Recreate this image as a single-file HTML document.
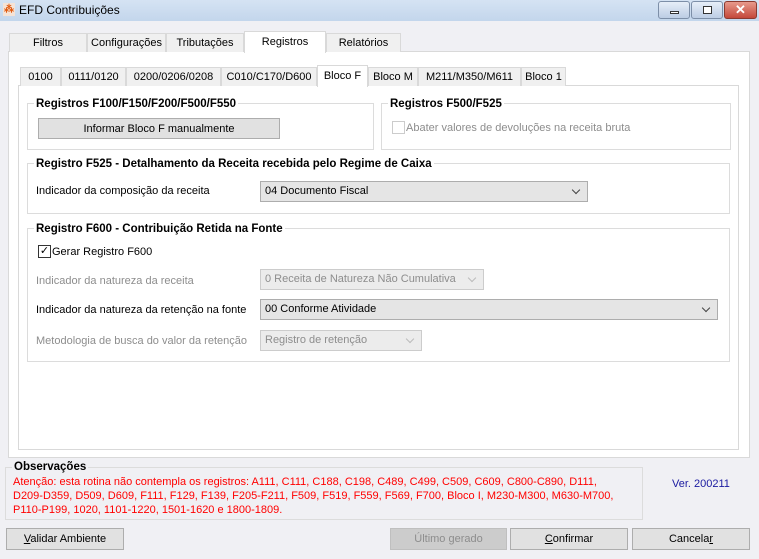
<!DOCTYPE html>
<html><head><meta charset="utf-8"><style>
*{box-sizing:border-box;margin:0;padding:0}
body{width:759px;height:559px;overflow:hidden;background:#f0f0f4;font-family:"Liberation Sans",Tahoma,sans-serif;font-size:11px;color:#000;position:relative}
.a{position:absolute;white-space:nowrap}
.tb{position:absolute;left:0;top:0;width:759px;height:21px;background:linear-gradient(#d5e3f3,#c3d6ec)}
.tab{position:absolute;height:19px;border:1px solid #d9d9d9;border-bottom:none;background:#f0f0f0;text-align:center;line-height:19px}
.sel{background:#fff;height:22px;z-index:2;line-height:20px}
.grp{position:absolute;border:1px solid #dcdcdc}
.gt{position:absolute;top:-7px;left:6px;background:#fff;font-weight:bold;padding:0 2px;line-height:14px;font-size:11.5px}
.btn{position:absolute;border:1px solid #adadad;background:#e1e1e1;text-align:center;line-height:20px}
.sl{position:absolute;border:1px solid #adadad;background:#e5e5e5;padding-left:4px;line-height:19px}
.sl:after{content:"";position:absolute;right:8px;top:5px;width:5px;height:5px;border-right:1px solid #444;border-bottom:1px solid #444;transform:rotate(45deg)}
.dis{color:#8d8d8d;background:#ececec;border-color:#ccc}
.dis:after{border-color:#bbb}
.cb{position:absolute;width:13px;height:13px;border:1px solid #333;background:#fff}
</style></head><body>
<div class="tb"></div>
<div class="a" style="left:3px;top:3px;width:12px;height:13px;background:#f5e3d6;color:#e05a10;font-size:10px;line-height:13px;text-align:center;font-weight:bold">⁂</div>
<div class="a" style="left:19px;top:3px;font-size:12px">EFD Contribuições</div>
<div class="a" style="left:658px;top:1px;width:32px;height:18px;border:1px solid #7d8fa8;border-radius:3px;background:linear-gradient(#e6eef8,#bccde4)"><div style="position:absolute;left:11px;top:9px;width:9px;height:3px;border:1px solid #333;background:#fff"></div></div>
<div class="a" style="left:691px;top:1px;width:32px;height:18px;border:1px solid #7d8fa8;border-radius:3px;background:linear-gradient(#e6eef8,#bccde4)"><div style="position:absolute;left:11px;top:4px;width:9px;height:8px;border:1px solid #333;background:#fff"></div></div>
<div class="a" style="left:724px;top:1px;width:33px;height:18px;border:1px solid #8b3a30;border-radius:3px;background:linear-gradient(#e79a8c,#c4483a);color:#fff;font-weight:bold;text-align:center;line-height:16px;font-size:13px">✕</div>

<div class="a" style="left:8px;top:51px;width:742px;height:407px;background:#fff;border:1px solid #d9d9d9"></div>
<div class="tab" style="left:9px;top:33px;width:78px">Filtros</div>
<div class="tab" style="left:87px;top:33px;width:79px">Configurações</div>
<div class="tab" style="left:166px;top:33px;width:78px">Tributações</div>
<div class="tab sel" style="left:244px;top:31px;width:82px">Registros</div>
<div class="tab" style="left:326px;top:33px;width:75px">Relatórios</div>

<div class="a" style="left:18px;top:85px;width:721px;height:365px;background:#fff;border:1px solid #d9d9d9"></div>
<div class="tab" style="left:20px;top:67px;width:41px">0100</div>
<div class="tab" style="left:61px;top:67px;width:65px">0111/0120</div>
<div class="tab" style="left:126px;top:67px;width:95px">0200/0206/0208</div>
<div class="tab" style="left:221px;top:67px;width:96px">C010/C170/D600</div>
<div class="tab sel" style="left:317px;top:65px;width:51px">Bloco F</div>
<div class="tab" style="left:368px;top:67px;width:50px">Bloco M</div>
<div class="tab" style="left:418px;top:67px;width:103px">M211/M350/M611</div>
<div class="tab" style="left:521px;top:67px;width:45px">Bloco 1</div>

<div class="grp" style="left:27px;top:103px;width:347px;height:47px"><div class="gt">Registros F100/F150/F200/F500/F550</div></div>
<div class="btn" style="left:38px;top:118px;width:242px;height:21px">Informar Bloco F manualmente</div>
<div class="grp" style="left:381px;top:103px;width:350px;height:47px"><div class="gt">Registros F500/F525</div></div>
<div class="cb" style="left:392px;top:121px;border-color:#ccc"></div>
<div class="a" style="left:406px;top:122px;color:#8d8d8d">Abater valores de devoluções na receita bruta</div>

<div class="grp" style="left:27px;top:163px;width:703px;height:51px"><div class="gt">Registro F525 - Detalhamento da Receita recebida pelo Regime de Caixa</div></div>
<div class="a" style="left:36px;top:185px">Indicador da composição da receita</div>
<div class="sl" style="left:260px;top:181px;width:328px;height:21px">04 Documento Fiscal</div>

<div class="grp" style="left:27px;top:228px;width:703px;height:134px"><div class="gt">Registro F600 - Contribuição Retida na Fonte</div></div>
<div class="cb" style="left:38px;top:245px;font-size:11px;line-height:11px;text-align:center">✓</div>
<div class="a" style="left:52px;top:246px">Gerar Registro F600</div>
<div class="a" style="left:36px;top:275px;color:#8d8d8d">Indicador da natureza da receita</div>
<div class="sl dis" style="left:260px;top:269px;width:224px;height:21px">0 Receita de Natureza Não Cumulativa</div>
<div class="a" style="left:36px;top:304px">Indicador da natureza da retenção na fonte</div>
<div class="sl" style="left:260px;top:299px;width:458px;height:21px">00 Conforme Atividade</div>
<div class="a" style="left:36px;top:335px;color:#8d8d8d">Metodologia de busca do valor da retenção</div>
<div class="sl dis" style="left:260px;top:330px;width:162px;height:21px">Registro de retenção</div>

<div class="a" style="left:5px;top:467px;width:638px;height:53px;border:1px solid #dcdcdc"></div>
<div class="a" style="left:12px;top:461px;font-weight:bold;background:#f0f0f4;padding:0 2px;font-size:11.5px">Observações</div>
<div class="a" style="left:13px;top:475px;color:#f00;line-height:14px">Atenção: esta rotina não contempla os registros: A111, C111, C188, C198, C489, C499, C509, C609, C800-C890, D111,<br>D209-D359, D509, D609, F111, F129, F139, F205-F211, F509, F519, F559, F569, F700, Bloco I, M230-M300, M630-M700,<br>P110-P199, 1020, 1101-1220, 1501-1620 e 1800-1809.</div>
<div class="a" style="left:672px;top:478px;color:#1a1aa0">Ver. 200211</div>

<div class="btn" style="left:6px;top:528px;width:118px;height:22px"><u>V</u>alidar Ambiente</div>
<div class="btn" style="left:390px;top:528px;width:117px;height:22px;color:#8d8d8d;background:#ccc;border-color:#bfbfbf">Último gerado</div>
<div class="btn" style="left:510px;top:528px;width:118px;height:22px"><u>C</u>onfirmar</div>
<div class="btn" style="left:632px;top:528px;width:118px;height:22px">Cancela<u>r</u></div>
</body></html>
